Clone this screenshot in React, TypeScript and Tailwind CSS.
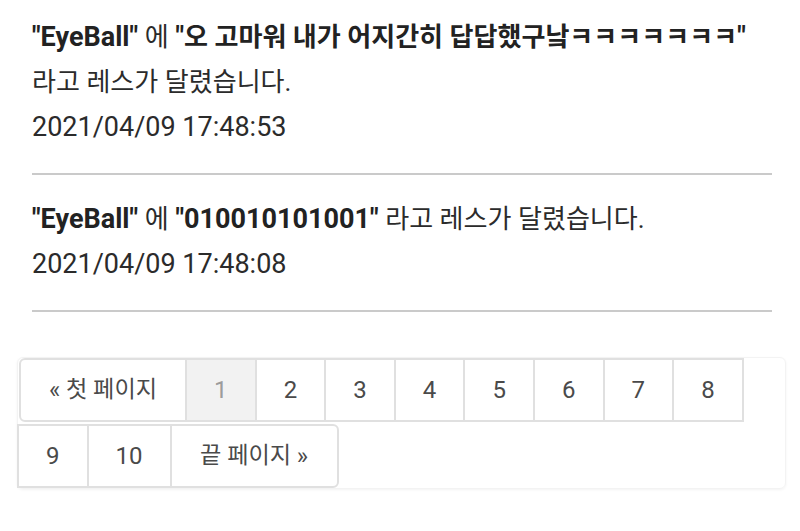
import React from "react";

// Hangul runs sit a touch smaller than the Latin text around them
const K = ({ children }: { children: React.ReactNode }) => (
  <span className="text-[0.965em]">{children}</span>
);

interface Reply {
  author: string;
  body: string;
  latinBody?: boolean;
  date: string;
}

const replies: Reply[] = [
  {
    author: "EyeBall",
    body: "오 고마워 내가 어지간히 답답했구낰ㅋㅋㅋㅋㅋㅋㅋ",
    date: "2021/04/09 17:48:53",
  },
  {
    author: "EyeBall",
    body: "010010101001",
    latinBody: true,
    date: "2021/04/09 17:48:08",
  },
];

const ReplyItem = ({ reply }: { reply: Reply }) => (
  <div className="pt-[22px] pb-[23px] first:pt-[15px] border-b-2 border-[#cacaca] text-[27px] leading-[45px] text-[#2b2b2b]">
    <div>
      <b className="font-bold text-[#222]">"{reply.author}"</b> <K>에</K>{" "}
      <b className="font-bold text-[#222]">
        "{reply.latinBody ? reply.body : <K>{reply.body}</K>}"
      </b>{" "}
      <K>라고 레스가 달렸습니다.</K>
    </div>
    <div>{reply.date}</div>
  </div>
);

const pageBtn =
  "h-16 flex items-center justify-center border-2 border-[#e0e0e0] -ml-[2px] text-[24px] text-[#4a4a4a] bg-white";

const Pagination = () => {
  const pages = [1, 2, 3, 4, 5, 6, 7, 8, 9, 10];
  return (
    <ul className="ml-[17px] w-[769px] flex flex-wrap gap-y-[2px] rounded-md border border-[#f3f3f3] shadow-[0_1px_3px_rgba(0,0,0,0.05)]">
      <li className={`${pageBtn} !ml-[1px] w-[168px] rounded-l-md`}>
        « <K>&nbsp;첫 페이지</K>
      </li>
      {pages.map((p) => (
        <li
          key={p}
          className={`${pageBtn} ${p === 10 ? "w-[85px]" : "w-[71.6px]"} ${
            p === 1 ? "!bg-[#f2f2f2] !text-[#9c9c9c]" : ""
          } ${p === 9 ? "!ml-[-1px]" : ""}`}
        >
          {p}
        </li>
      ))}
      <li className={`${pageBtn} w-[169px] rounded-r-md`}>
        <K>끝 페이지&nbsp;</K> »
      </li>
    </ul>
  );
};

export default function App() {
  return (
    <div className="w-[800px] h-[531px] overflow-hidden bg-white font-[Roboto,Noto_Sans_CJK_KR,sans-serif]">
      <div className="pl-8 pr-7">
        {replies.map((r, i) => (
          <ReplyItem key={i} reply={r} />
        ))}
      </div>
      <div className="pt-[45px]">
        <Pagination />
      </div>
    </div>
  );
}
